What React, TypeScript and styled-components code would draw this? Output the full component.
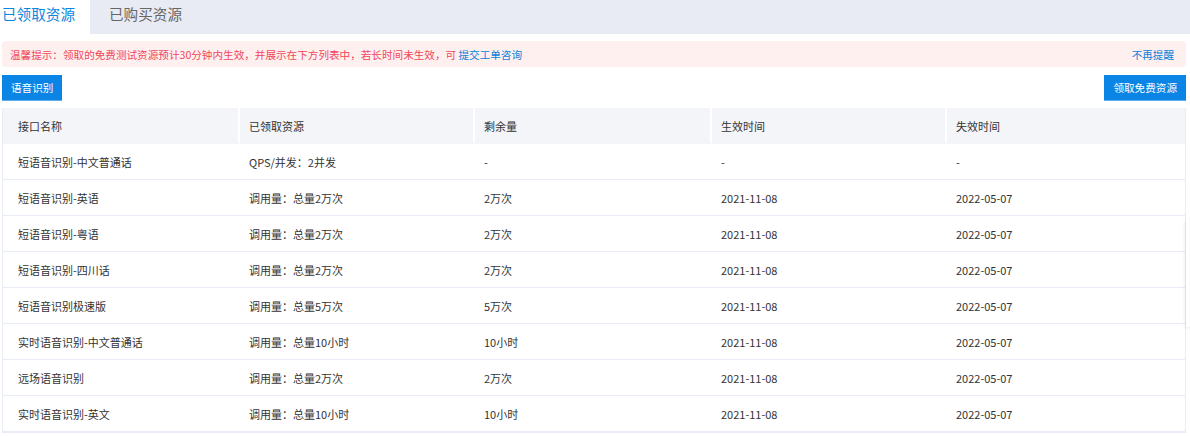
import styled, { createGlobalStyle } from 'styled-components'

interface IRow {
  name: string
  resource: string
  remain: string
  start: string
  end: string
}

const rows: IRow[] = [
  { name: '短语音识别-中文普通话', resource: 'QPS/并发：2并发', remain: '-', start: '-', end: '-' },
  { name: '短语音识别-英语', resource: '调用量：总量2万次', remain: '2万次', start: '2021-11-08', end: '2022-05-07' },
  { name: '短语音识别-粤语', resource: '调用量：总量2万次', remain: '2万次', start: '2021-11-08', end: '2022-05-07' },
  { name: '短语音识别-四川话', resource: '调用量：总量2万次', remain: '2万次', start: '2021-11-08', end: '2022-05-07' },
  { name: '短语音识别极速版', resource: '调用量：总量5万次', remain: '5万次', start: '2021-11-08', end: '2022-05-07' },
  { name: '实时语音识别-中文普通话', resource: '调用量：总量10小时', remain: '10小时', start: '2021-11-08', end: '2022-05-07' },
  { name: '远场语音识别', resource: '调用量：总量2万次', remain: '2万次', start: '2021-11-08', end: '2022-05-07' },
  { name: '实时语音识别-英文', resource: '调用量：总量10小时', remain: '10小时', start: '2021-11-08', end: '2022-05-07' },
]

const GlobalStyle = createGlobalStyle`
  body {
    margin: 0;
    background: #fff;
    font-family: "Noto Sans CJK SC", "Noto Sans", sans-serif;
    color: #333;
  }
`

const Page = styled.div`
  position: relative;
  width: 1190px;
  height: 436px;
  overflow: hidden;
`

const Tabs = styled.div`
  display: flex;
  height: 34px;
  background: #e8ebf3;
`

const Tab = styled.div<{ $active?: boolean }>`
  width: ${(p) => (p.$active ? '90px' : '124px')};
  padding-left: ${(p) => (p.$active ? '2px' : '19px')};
  box-sizing: border-box;
  background: ${(p) => (p.$active ? '#fff' : 'transparent')};
  color: ${(p) => (p.$active ? '#0b86de' : '#666')};
  font-size: 14.6px;
  line-height: 27px;
`

const Body = styled.div`
  padding: 7px 4px 0 2px;
`

const Alert = styled.div`
  display: flex;
  justify-content: space-between;
  align-items: center;
  height: 26px;
  padding: 0 12px 0 8px;
  background: #fff0f0;
  border-radius: 4px;
  font-size: 10.6px;
  color: #f0465a;
`

const Link = styled.span`
  color: #0b7fd8;
`

const Toolbar = styled.div`
  display: flex;
  justify-content: space-between;
  margin-top: 8px;
`

const Button = styled.button`
  height: 26px;
  padding: 0 9px;
  border: none;
  border-radius: 0;
  background: #0a85e6;
  color: #fff;
  font-family: inherit;
  font-size: 10.6px;
  border-bottom: 1px solid #5aaef0;
`

const Table = styled.div`
  margin-top: 7px;
  border: 1px solid #e8edf5;
  border-top: none;
`

const Row = styled.div<{ $head?: boolean }>`
  display: grid;
  grid-template-columns: 237px 235px 237px 235px 1fr;
  height: 36px;
  background: ${(p) => (p.$head ? '#f4f5f9' : '#fff')};
  border-bottom: 1px solid ${(p) => (p.$head ? '#f4f5f9' : '#e8edf5')};
  box-sizing: border-box;
`

const Cell = styled.div<{ $head?: boolean; $first?: boolean }>`
  display: flex;
  align-items: center;
  padding-left: ${(p) => (p.$first ? '15px' : '9px')};
  font-size: 11px;
  color: #333;
  border-left: ${(p) => (p.$head && !p.$first ? '2px solid #fff' : 'none')};
  margin-left: ${(p) => (p.$head && !p.$first ? '-2px' : '0')};
`

const Shade = styled.div`
  position: absolute;
  left: 1186px;
  top: 220px;
  width: 20px;
  height: 107px;
  background: #fff;
  box-shadow: -1px 1px 4px rgba(0, 0, 0, 0.08);
`

const headers = ['接口名称', '已领取资源', '剩余量', '生效时间', '失效时间']

const App = () => {
  return (
    <Page>
      <GlobalStyle />
      <Tabs>
        <Tab $active>已领取资源</Tab>
        <Tab>已购买资源</Tab>
      </Tabs>
      <Body>
        <Alert>
          <span>
            温馨提示：领取的免费测试资源预计30分钟内生效，并展示在下方列表中，若长时间未生效，可 <Link>提交工单咨询</Link>
          </span>
          <Link>不再提醒</Link>
        </Alert>
        <Toolbar>
          <Button>语音识别</Button>
          <Button>领取免费资源</Button>
        </Toolbar>
        <Table>
          <Row $head>
            {headers.map((h, i) => (
              <Cell key={h} $head $first={i === 0}>
                {h}
              </Cell>
            ))}
          </Row>
          {rows.map((r) => (
            <Row key={r.name}>
              <Cell $first>{r.name}</Cell>
              <Cell>{r.resource}</Cell>
              <Cell>{r.remain}</Cell>
              <Cell>{r.start}</Cell>
              <Cell>{r.end}</Cell>
            </Row>
          ))}
        </Table>
      </Body>
      <Shade />
    </Page>
  )
}

export default App
